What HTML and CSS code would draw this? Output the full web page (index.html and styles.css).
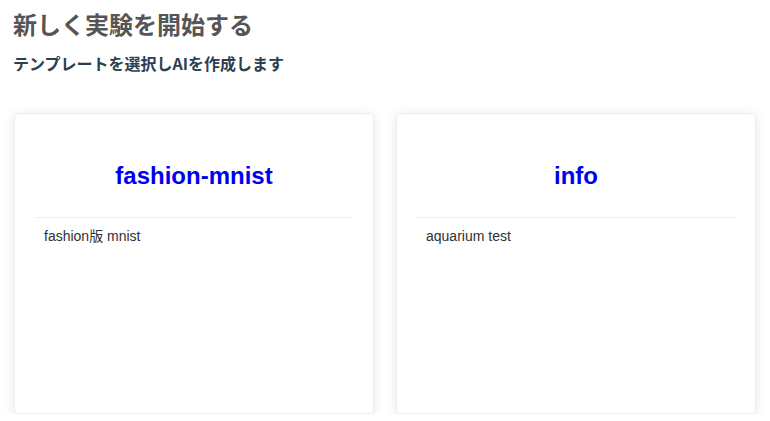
FILE: index.html
```html
<!DOCTYPE html>
<html lang="ja">
<head>
<meta charset="utf-8">
<link rel="stylesheet" href="styles.css">
</head>
<body>
<div class="page">
  <h1 class="title">新しく実験を開始する</h1>
  <h2 class="subtitle">テンプレートを選択しAIを作成します</h2>
  <div class="cards">
    <div class="card">
      <div class="card-head"><div class="card-title">fashion-mnist</div></div>
      <div class="card-desc">fashion版 mnist</div>
    </div>
    <div class="card">
      <div class="card-head"><div class="card-title">info</div></div>
      <div class="card-desc">aquarium test</div>
    </div>
  </div>
</div>
</body>
</html>
```
FILE: styles.css
```css
html, body {
  margin: 0;
  padding: 0;
  background: #ffffff;
}
.page {
  padding: 8px 14px 0 13px;
  font-family: "Noto Sans CJK JP", "Liberation Sans", sans-serif;
}
.title {
  margin: 0;
  font-size: 24px;
  line-height: 32px;
  font-weight: 700;
  color: #555555;
}
.subtitle {
  margin: 11px 0 0 0;
  font-size: 16px;
  line-height: 24px;
  font-weight: 700;
  color: #2c3e50;
}
.cards {
  display: grid;
  grid-template-columns: 1fr 1fr;
  gap: 22px;
  margin: 38px 0 0 1px;
}
.card {
  height: 299px;
  background: #ffffff;
  border: 1px solid #ebeef5;
  border-radius: 4px;
  box-shadow: 0 2px 12px rgba(0, 0, 0, 0.1);
  padding: 0 20px;
}
.card-head {
  padding: 48px 0 27px;
  border-bottom: 1px solid #ebeef5;
  text-align: center;
}
.card-title {
  font-family: "Liberation Sans", Arial, sans-serif;
  font-size: 24px;
  line-height: 28px;
  font-weight: 700;
  color: #0000ee;
}
.card-desc {
  margin-top: 8px;
  padding-left: 9px;
  font-family: "Liberation Sans", "Noto Sans CJK JP", sans-serif;
  font-size: 14px;
  line-height: 20px;
  color: #303133;
}
```
